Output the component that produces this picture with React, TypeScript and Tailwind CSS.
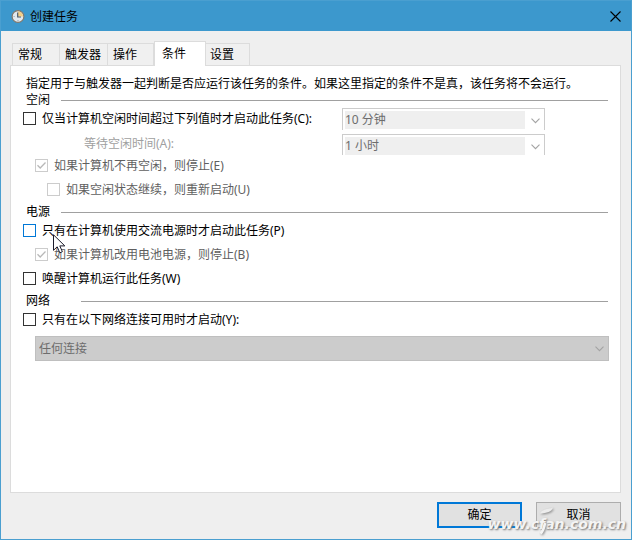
import React from "react";

interface ICheckRow {
  id: string;
  label: string;
  checked?: boolean;
  disabled?: boolean;
  hot?: boolean;
  className?: string;
}

const tabs = [
  { name: "常规", className: "w-12 px-[5px]" },
  { name: "触发器", className: "w-12 px-[5px]" },
  { name: "操作", className: "w-[46px] px-[5px]" },
  { name: "条件", className: "w-[52px] px-[7px]", active: true },
  { name: "设置", className: "w-11 px-1" },
];

const ClockIcon = () => (
  <svg className="size-[14px]" viewBox="0 0 14 14" aria-hidden="true">
    <circle cx="7" cy="7.5" r="5.9" fill="#e3e9ee" stroke="#81786c" strokeWidth="1.2" />
    <path d="M7 7.5V2.4A5.1 5.1 0 0 1 12.1 7.5Z" fill="#f6cf85" />
    <path d="M6.7 3.5V8H10" fill="none" stroke="#4a5a68" strokeWidth="1.2" />
    <path d="M2.6 7.5h1M7 12v-1" stroke="#8fa3b3" />
  </svg>
);

const Chevron: React.FC<{ className: string }> = ({ className }) => (
  <svg
    className={`pointer-events-none absolute h-[6px] w-[9px] ${className}`}
    viewBox="0 0 9 6"
    fill="none"
    stroke="#a3a3a3"
    aria-hidden="true"
  >
    <path d="M0.5 0.7L4.5 4.7L8.5 0.7" strokeWidth="1.1" />
  </svg>
);

const CheckRow: React.FC<ICheckRow> = ({ id, label, checked, disabled, hot, className = "" }) => {
  const border = disabled ? "border-[#cccccc]" : hot ? "border-[#0078d7]" : "border-[#333333]";
  return (
    <div className={`flex h-[21px] items-center gap-[6px] ${className}`}>
      <span className="relative flex size-[13px] shrink-0">
        <input
          id={id}
          type="checkbox"
          defaultChecked={checked}
          disabled={disabled}
          className={`peer size-[13px] appearance-none border bg-white ${border}`}
        />
        <svg
          className="pointer-events-none absolute inset-0 hidden size-[13px] peer-checked:block"
          viewBox="0 0 13 13"
          fill="none"
          stroke={disabled ? "#b8b8b8" : "#333333"}
          aria-hidden="true"
        >
          <path d="M2.5 6.3L5.2 9L10.5 3.5" strokeWidth="1.3" />
        </svg>
      </span>
      <label htmlFor={id} className={disabled ? "text-[#5f5f5f]" : ""}>
        {label}
      </label>
    </div>
  );
};

const GroupTitle: React.FC<{ title: string; wide?: boolean }> = ({ title, wide }) => (
  <div className="flex h-4 items-center pr-3 pl-[15px]">
    <h2 className={wide ? "w-[55px]" : "w-[35px]"}>{title}</h2>
    <div className="h-px flex-1 bg-[#a0a0a0]" />
  </div>
);

const TimeSelect: React.FC<{ id: string; label: string; value: string }> = ({ id, label, value }) => (
  <div className="relative h-[22px] border border-b-0 border-[#cccccc] bg-white pt-[2px] pr-[19px] pl-[2px]">
    <select
      id={id}
      aria-label={label}
      disabled
      className="block h-[18px] w-full appearance-none bg-[#efefef] leading-[18px] text-[#6d6d6d] opacity-100"
    >
      <option>{value}</option>
    </select>
    <Chevron className="top-[9px] right-1" />
  </div>
);

const Cursor = () => (
  <svg
    className="pointer-events-none absolute top-[14px] left-[42px] h-[20px] w-[13px]"
    viewBox="0 0 13 20"
    aria-hidden="true"
  >
    <path
      d="M0.5 0.8V16.3L4.2 12.8L6.8 18.8L9.4 17.7L6.8 11.9H11.8Z"
      fill="#ffffff"
      stroke="#1b1b2b"
    />
  </svg>
);

const Conditions = () => (
  <main className="flex-1 border border-[#dcdcdc] bg-white pt-2">
    <p className="h-[18px] pl-[15px] leading-5">
      指定用于与触发器一起判断是否应运行该任务的条件。如果这里指定的条件不是真，该任务将不会运行。
    </p>

    <section>
      <GroupTitle title="空闲" />
      <div className="flex h-[47px]">
        <div className="w-[331px] pl-3">
          <CheckRow id="idle" label="仅当计算机空闲时间超过下列值时才启动此任务(C):" />
          <label htmlFor="wait" className="mt-1 flex h-[21px] items-center pl-[61px] text-[#a0a0a0]">
            等待空闲时间(A):
          </label>
        </div>
        <div className="flex w-[203px] flex-col gap-1">
          <TimeSelect id="idle-time" label="空闲时间" value="10 分钟" />
          <TimeSelect id="wait" label="等待空闲时间" value="1 小时" />
        </div>
      </div>
      <div className="flex flex-col gap-[3px] pl-6">
        <CheckRow id="stop-idle" label="如果计算机不再空闲，则停止(E)" checked disabled />
        <CheckRow id="restart" label="如果空闲状态继续，则重新启动(U)" disabled className="pl-3" />
      </div>
    </section>

    <section className="mt-1">
      <GroupTitle title="电源" />
      <div className="relative flex flex-col gap-[3px] pl-3">
        <CheckRow id="ac" label="只有在计算机使用交流电源时才启动此任务(P)" hot />
        <CheckRow id="battery" label="如果计算机改用电池电源，则停止(B)" checked disabled className="pl-3" />
        <CheckRow id="wake" label="唤醒计算机运行此任务(W)" />
        <Cursor />
      </div>
    </section>

    <section className="mt-1">
      <GroupTitle title="网络" wide />
      <CheckRow id="network" label="只有在以下网络连接可用时才启动(Y):" className="pl-3" />
      <div className="relative mt-[6px] mr-[11px] ml-6">
        <select
          aria-label="网络连接"
          disabled
          className="block h-[25px] w-full appearance-none border border-[#bfbfbf] bg-[#cccccc] px-[3px] text-[#6d6d6d] opacity-100"
        >
          <option>任何连接</option>
        </select>
        <Chevron className="top-[10px] right-[5px]" />
      </div>
    </section>
  </main>
);

const Watermark = () => (
  <div
    className="pointer-events-none absolute right-[5px] bottom-[5px] font-['DejaVu_Sans',sans-serif] text-sm leading-5 font-bold text-[#f4f4f4] italic"
    style={{ textShadow: "1px 1px 2px #777777" }}
  >
    www.cfan.com.cn
    {/* leaf above the f and its long tail */}
    <svg
      className="absolute -top-2 left-[46px] h-[30px] w-[22px]"
      viewBox="0 0 22 30"
      style={{ filter: "drop-shadow(1px 1px 1px #8a8a8a)" }}
      aria-hidden="true"
    >
      <path d="M6 7.5C8 3 13 3.5 19 1.5C17.5 6 13 7 6 7.5Z" fill="#ececec" />
      <path d="M11 17C10.2 21.5 9 25.5 6.5 27.5" fill="none" stroke="#f4f4f4" strokeWidth="2.6" />
    </svg>
  </div>
);

const App = () => {
  return (
    <div className="relative flex min-h-screen w-full flex-col border border-[#4a9fd0] bg-[#efefef] font-['Noto_Sans','Noto_Sans_CJK_SC',sans-serif] text-xs text-black">
      <header className="flex h-[30px] items-center bg-[#3c98cd] px-[10px]">
        <ClockIcon />
        <h1 className="ml-[5px] flex-1 pt-px">创建任务</h1>
        <button type="button" aria-label="关闭">
          <svg className="size-[11px]" viewBox="0 0 11 11" stroke="#000000" aria-hidden="true">
            <path d="M0.5 0.5L10.5 10.5M10.5 0.5L0.5 10.5" strokeWidth="1.1" />
          </svg>
        </button>
      </header>

      <div className="flex flex-1 flex-col pt-[10px] pr-[10px] pl-[9px]">
        <div role="tablist" className="-mb-px flex items-end pr-2 pl-[2px]">
          {tabs.map((tab) => (
            <button
              key={tab.name}
              type="button"
              role="tab"
              aria-selected={!!tab.active}
              className={`border border-[#dcdcdc] text-left whitespace-nowrap ${tab.className} ${
                tab.active
                  ? "relative h-[25px] border-b-0 bg-white pb-px"
                  : "h-[23px] border-l-0 bg-[#f0f0f0] first:border-l"
              }`}
            >
              {tab.name}
            </button>
          ))}
        </div>
        <Conditions />
        <footer className="flex justify-end gap-[14px] pt-[9px] pb-[11px]">
          <button type="button" className="h-[26px] w-[85px] border-2 border-[#0078d7] bg-[#e1e1e1]">
            确定
          </button>
          <button type="button" className="h-[26px] w-[85px] border border-[#adadad] bg-[#e1e1e1]">
            取消
          </button>
        </footer>
      </div>
      <Watermark />
    </div>
  );
};

export default App;
